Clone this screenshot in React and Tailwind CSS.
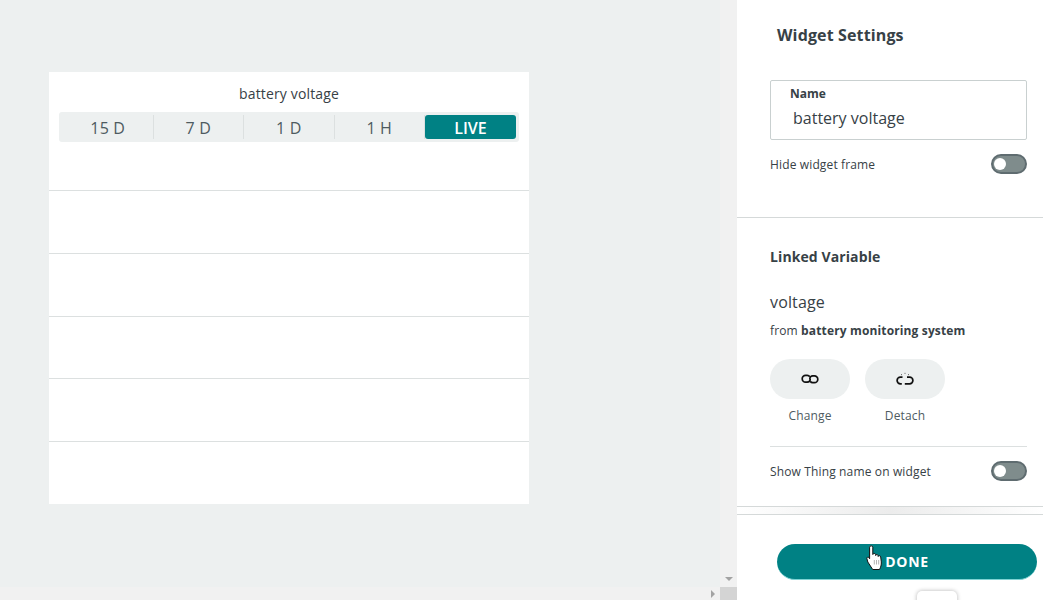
const tabs = ['15 D', '7 D', '1 D', '1 H'];
const gridRows = [0, 1, 2, 3];

const Toggle = () => (
  <div className="w-9 h-5 rounded-full bg-[#7f8c8c] border-2 border-[#5f6c70] flex items-center pl-[1px]">
    <div className="w-3 h-3 rounded-full bg-white" />
  </div>
);

const LinkIcon = () => (
  <svg width="18" height="10" viewBox="0 0 18 10" fill="none" stroke="#111" strokeWidth="1.7">
    <path d="M8.800 2.800C8.200 1.800 7.300 1.300 6.200 1.300H4.600a3.400 3.400 0 0 0 0 6.800h1.600c1.900 0 3-1.300 3-3.200" />
    <path d="M9.200 7.200c.6 1 1.500 1.500 2.600 1.500h1.600a3.400 3.400 0 0 0 0-6.800h-1.600c-1.900 0-3 1.300-3 3.200" />
  </svg>
);

const UnlinkIcon = () => (
  <svg width="18" height="14" viewBox="0 0 18 14" fill="none" stroke="#111" strokeWidth="1.7">
    <path d="M6.500 5.200H4.400a3.300 3.300 0 0 0 0 6.600h1.400" />
    <path d="M11 5.200h2.600a3.300 3.300 0 0 1 0 6.600H8.800" />
    <path d="M5.500 2v1.200M9 .8V2M12.500 2v1.200" strokeWidth="1" stroke="#777" />
  </svg>
);

const ActionButton = ({ label, children }) => (
  <div className="flex flex-col items-center w-20">
    <div className="w-20 h-10 rounded-full bg-[#edf0f0] flex items-center justify-center">{children}</div>
    <span className="mt-2 text-xs leading-[18px] tracking-[0.14px] text-[#4e5b61]">{label}</span>
  </div>
);

const Pointer = () => (
  <svg className="absolute left-[866px] top-[545px]" width="18" height="26" viewBox="0 0 18 26">
    <path
      d="M3.600 2.200c0-1.800 3.200-1.800 3.200 0v7.300c.4-1.400 2.600-1.400 2.800 0v1c.3-1.300 2.400-1.200 2.600.2v.8c.4-1.200 2.300-1 2.500.4l.6 5c.2 3-.6 5.400-1.800 7.600H6.700L1.800 17 .9 13.600c-.3-1.300 1.200-2 2-1l.7 1.200z"
      fill="#fff"
      stroke="#111"
      strokeWidth="1"
    />
    <path d="M8.300 15v4.500M10.500 15v4.500M12.700 15v4.500" stroke="#666" strokeWidth=".5" />
  </svg>
);

export default function App() {
  return (
    <div className="relative flex w-[1043px] h-[600px] overflow-hidden bg-white font-['Open_Sans',sans-serif] text-[#374146]">
      <div className="w-[737px] flex flex-col bg-[#f1f1f1]">
        <div className="flex flex-1 min-h-0">
          <div className="flex-1 bg-[#edf0f0] pt-[72px] pl-[49px]">
            <div className="w-[480px] h-[432px] bg-white flex flex-col">
              <div className="h-[40px] pt-3 text-center text-sm leading-[20px] tracking-[0.14px] text-[#374146]">battery voltage</div>
              <div className="mx-[10px] h-[30px] rounded-[3px] bg-[#edf0f0] flex items-center pl-1 pr-[3px]">
                {tabs.map((tab) => (
                  <div
                    key={tab}
                    className="flex-1 h-6 border-r border-[#dce0e0] flex items-center justify-center pt-[2px] text-base tracking-[0.2px] text-[#4e5b61]"
                  >
                    {tab}
                  </div>
                ))}
                <div className="w-[91px] h-6 rounded-[3px] bg-[#008184] flex items-center justify-center pt-[2px] text-base font-semibold text-white">
                  LIVE
                </div>
              </div>
              <div className="h-[49px] border-b border-[#dce0e0]" />
              {gridRows.map((row) => (
                <div key={row} className="h-[62.8px] border-b border-[#dce0e0]" />
              ))}
            </div>
          </div>
          <div className="w-[17px] flex flex-col justify-end items-center pb-[6px]">
            <div className="w-0 h-0 border-x-[4px] border-x-transparent border-t-[4px] border-t-[#a3a3a3]" />
          </div>
        </div>
        <div className="h-[13px] flex justify-end">
          <div className="flex items-center pr-[5px]">
            <div className="w-0 h-0 border-y-[4px] border-y-transparent border-l-[4px] border-l-[#a3a3a3]" />
          </div>
          <div className="w-[17px] bg-[#d4d4d4]" />
        </div>
      </div>

      <div className="w-[306px] flex flex-col">
        <section className="h-[218px] border-b border-[#d5d9d9] pt-[24px] pl-[33px] pr-4">
          <h2 className="pl-[7px] text-base leading-[22px] font-bold tracking-[0.14px] text-[#374146]">Widget Settings</h2>
          <div className="mt-[34px] h-[60px] border border-[#c9d0d0] rounded-[2px] pl-[19px] pt-[4px]">
            <div className="text-xs leading-[17px] font-bold">Name</div>
            <div className="mt-[5px] pl-[3px] text-base leading-[22px]">battery voltage</div>
          </div>
          <div className="mt-[14px] flex items-center justify-between">
            <span className="text-xs leading-5 translate-y-[1px] tracking-[0.14px]">Hide widget frame</span>
            <Toggle />
          </div>
        </section>

        <section className="h-[288px] pt-[29px] pl-[33px] pr-4">
          <h3 className="text-sm leading-[20px] font-bold tracking-[0.1px]">Linked Variable</h3>
          <div className="mt-[24px] text-base leading-[22px] tracking-[0.14px]">voltage</div>
          <div className="mt-[9px] text-xs leading-[18px] tracking-[0.14px]">
            from <span className="font-bold">battery monitoring system</span>
          </div>
          <div className="mt-[19px] flex gap-[15px]">
            <ActionButton label="Change">
              <LinkIcon />
            </ActionButton>
            <ActionButton label="Detach">
              <UnlinkIcon />
            </ActionButton>
          </div>
          <div className="mt-[21px] pt-[14px] border-t border-[#dce0e0] flex items-center justify-between">
            <span className="text-xs leading-5 translate-y-[1px] tracking-[0.14px]">Show Thing name on widget</span>
            <Toggle />
          </div>
        </section>

        <div className="h-2 border-t border-[#d5d9d9] bg-gradient-to-r from-white via-[#ececec] to-white" />

        <div className="flex-1 border-t border-[#d5d9d9] pl-10 pt-[29px]">
          <button className="w-[260px] h-9 rounded-full bg-[#008184] border-b border-[#7fd3d4] pt-[1px] text-white text-sm font-bold tracking-wider">
            DONE
          </button>
        </div>
      </div>

      <div className="absolute left-[917px] top-[591px] w-10 h-5 rounded-t-[5px] bg-white shadow-[0_0_4px_rgba(0,0,0,0.3)]" />
      <Pointer />
    </div>
  );
}
